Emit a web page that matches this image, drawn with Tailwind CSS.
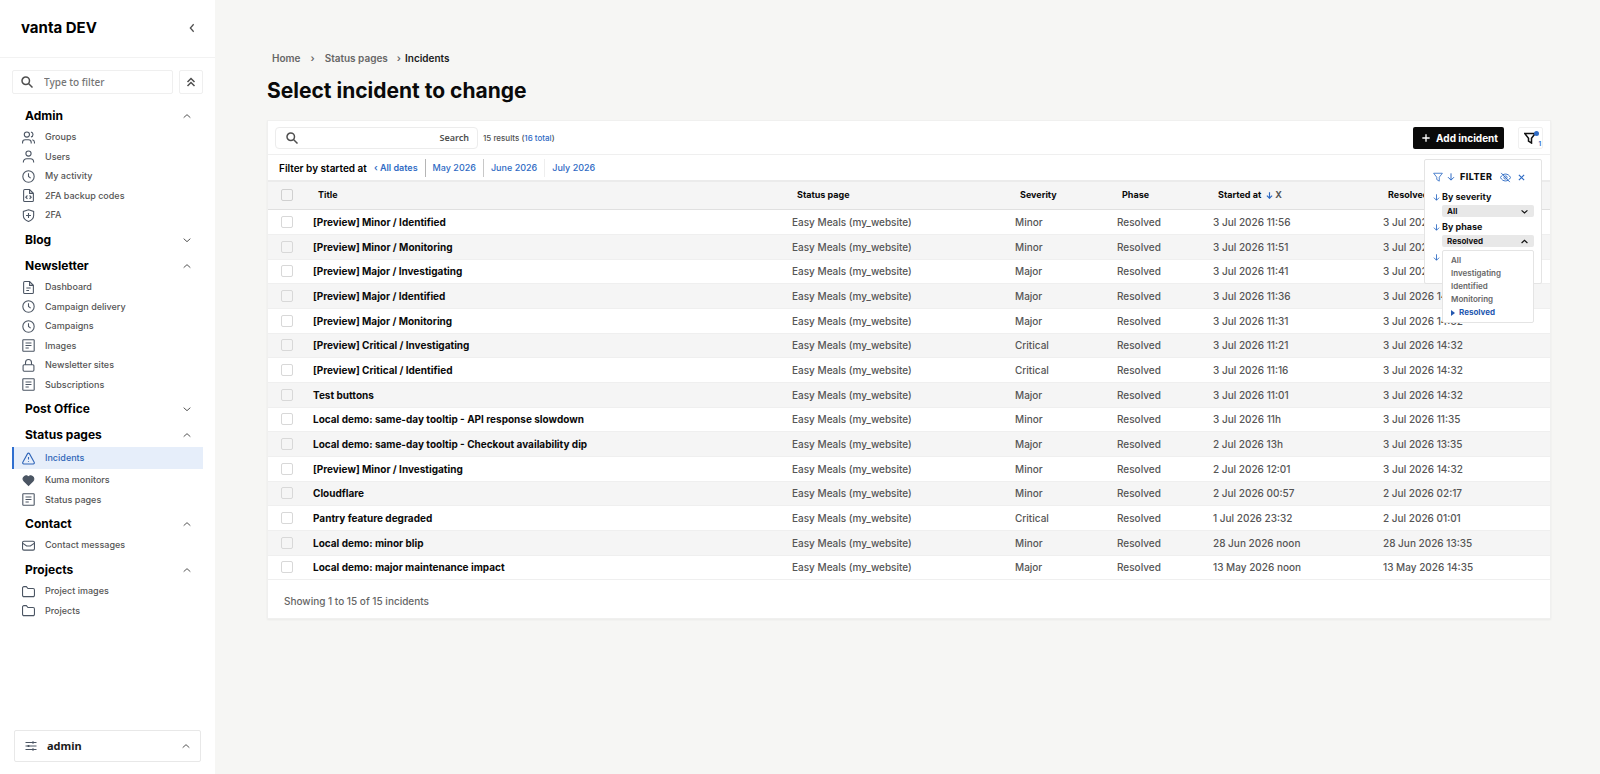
<!DOCTYPE html>
<html lang="en">

<head>
    <meta charset="UTF-8">
    <meta name="viewport" content="width=device-width, initial-scale=1.0">
    <title>Select incident to change | vanta DEV</title>
    <script src="https://cdn.jsdelivr.net/npm/@tailwindcss/browser@4"></script>
</head>

<body class="min-h-screen flex bg-[#f6f6f4] font-['Inter',sans-serif] text-[11px] leading-4 text-[#4f4f4f]">

    <!-- Icon sprite -->
    <svg class="hidden" xmlns="http://www.w3.org/2000/svg">
        <symbol id="i-search" viewBox="0 0 24 24"><circle cx="9.500" cy="9.500" r="7.500" /><path d="M15 15l8 8" /></symbol>
        <symbol id="i-up" viewBox="0 0 24 24"><path d="M2 17l10-9 10 9" /></symbol>
        <symbol id="i-down" viewBox="0 0 24 24"><path d="M2 8l10 9 10-9" /></symbol>
        <symbol id="i-left" viewBox="0 0 24 24"><path d="M16 3l-8 9 8 9" /></symbol>
        <symbol id="i-dblup" viewBox="0 0 24 24"><path d="M5 12l7-7 7 7M5 20l7-7 7 7" /></symbol>
        <symbol id="i-groups" viewBox="0 0 24 24"><circle cx="9" cy="6.500" r="4.800" /><path d="M1 23v-2a5 5 0 0 1 5-5h6a5 5 0 0 1 5 5v2M16.500 1.800a4.800 4.800 0 0 1 0 9.400M23 23v-2a5 5 0 0 0-4-4.900" /></symbol>
        <symbol id="i-user" viewBox="0 0 24 24"><circle cx="12" cy="6.500" r="4.800" /><path d="M2.500 23v-1a6 6 0 0 1 6-6h7a6 6 0 0 1 6 6v1" /></symbol>
        <symbol id="i-clock" viewBox="0 0 24 24"><circle cx="12" cy="12" r="10.500" /><path d="M12 6v6l4 3" /></symbol>
        <symbol id="i-code" viewBox="0 0 24 24"><path d="M14 1H5a2 2 0 0 0-2 2v18a2 2 0 0 0 2 2h14a2 2 0 0 0 2-2V8zM14 1v7h7M10 12l-3 3 3 3M14 12l3 3-3 3" /></symbol>
        <symbol id="i-shield" viewBox="0 0 24 24"><path d="M12 1.500l9.500 3V12c0 5.500-4 9-9.500 11-5.500-2-9.500-5.500-9.500-11V4.500zM12 7.500v9M7.500 12h9" /></symbol>
        <symbol id="i-file" viewBox="0 0 24 24"><path d="M14 1H5a2 2 0 0 0-2 2v18a2 2 0 0 0 2 2h14a2 2 0 0 0 2-2V8zM14 1v7h7M8 13h8M8 17.500h5" /></symbol>
        <symbol id="i-list" viewBox="0 0 24 24"><rect x="1.500" y="1.500" width="21" height="21" rx="1" /><path d="M6.500 7.500h11M6.500 12h11M6.500 16.500h6" /></symbol>
        <symbol id="i-lock" viewBox="0 0 24 24"><rect x="2" y="10.500" width="20" height="12" rx="2" /><path d="M6.500 10.500V6.500a5.500 5.500 0 0 1 11 0v4" /></symbol>
        <symbol id="i-alert" viewBox="0 0 24 24"><path d="M10.300 3L1.500 19a2 2 0 0 0 1.700 3h17.600a2 2 0 0 0 1.700-3L13.700 3a2 2 0 0 0-3.400 0zM12 9v5M12 17v1.500" /></symbol>
        <symbol id="i-heart" viewBox="0 0 24 24"><path d="M12 21L3.500 12.500a5.500 5.500 0 0 1 8.500-7 5.500 5.500 0 0 1 8.500 7z" fill="currentColor" /></symbol>
        <symbol id="i-mail" viewBox="0 0 24 24"><rect x="1" y="4" width="22" height="16.500" rx="2.500" /><path d="M1 7.500l7.500 5.500h7L23 7.500" /></symbol>
        <symbol id="i-folder" viewBox="0 0 24 24"><path d="M23 19a2.500 2.500 0 0 1-2.500 2.500h-17A2.500 2.500 0 0 1 1 19V5.500A2.500 2.500 0 0 1 3.500 3H8l3 3.500h9.500A2.500 2.500 0 0 1 23 9z" /></symbol>
        <symbol id="i-sliders" viewBox="0 0 24 24"><path d="M1 5h22M1 12h22M1 19h22" /><path d="M16 3v4M7 10v4M16 17v4" stroke-width="3.500" /></symbol>
        <symbol id="i-funnel" viewBox="0 0 24 24"><path d="M1.500 3h21L15 12.500V22l-6-4v-5.500z" /></symbol>
        <symbol id="i-arrow" viewBox="0 0 24 24"><path d="M12 1v20M3 12.500l9 9 9-9" /></symbol>
        <symbol id="i-x" viewBox="0 0 24 24"><path d="M3 3l18 18M21 3L3 21" /></symbol>
        <symbol id="i-plus" viewBox="0 0 24 24"><path d="M12 1v22M1 12h22" /></symbol>
        <symbol id="i-eyeoff" viewBox="0 0 24 24"><path d="M1 12c2.500-5 6.500-7.500 11-7.500S20.500 7 23 12c-2.500 5-6.500 7.500-11 7.500S3.500 17 1 12zM2.500 2l19 20" /><circle cx="12" cy="12" r="3.500" /></symbol>
    </svg>

    <!-- Sidebar -->
    <aside class="w-[215px] shrink-0 flex flex-col bg-white">
        <div class="h-[58px] pb-[2px] pl-[21px] pr-[14px] flex items-center justify-between border-b border-[#f2f2f2]">
            <a href="#" class="text-[15px] font-bold text-black">vanta DEV</a>
            <button type="button" aria-label="Collapse sidebar" class="p-1">
                <svg class="size-[10px] fill-none stroke-current stroke-3"><use href="#i-left" /></svg>
            </button>
        </div>

        <div class="flex gap-[6px] px-3 pt-3 pb-[9px]">
            <label class="flex-1 flex items-center h-6 pl-2 border border-[#efefef] rounded-xs">
                <svg class="size-3 shrink-0 fill-none stroke-current stroke-3"><use href="#i-search" /></svg>
                <input type="text" aria-label="Filter menu" placeholder="Type to filter" class="w-full ml-[11px] outline-none font-['Noto_Sans',sans-serif] text-[10px] font-medium placeholder:text-[#757575]">
            </label>
            <button type="button" aria-label="Collapse all" class="size-6 flex items-center justify-center border border-[#efefef] rounded-xs">
                <svg class="size-3 fill-none stroke-current stroke-3"><use href="#i-dblup" /></svg>
            </button>
        </div>

        <nav class="flex flex-col gap-[2px] px-3 text-[9px] font-medium text-[#555]">
            <section>
                <button type="button" class="w-full h-6 pt-[2px] pl-[13px] pr-3 flex items-center justify-between text-xs font-bold text-black">Admin
                    <svg class="size-2 fill-none stroke-[#555] stroke-3"><use href="#i-up" /></svg>
                </button>
                <ul class="fill-none stroke-[#4b5563] stroke-2">
                    <li class="h-5 even:h-[19px]"><a href="#" class="h-full pl-[10px] flex items-center gap-[10px]"><svg class="size-[13px]"><use href="#i-groups" /></svg>Groups</a></li>
                    <li class="h-5 even:h-[19px]"><a href="#" class="h-full pl-[10px] flex items-center gap-[10px]"><svg class="size-[13px]"><use href="#i-user" /></svg>Users</a></li>
                    <li class="h-5 even:h-[19px]"><a href="#" class="h-full pl-[10px] flex items-center gap-[10px]"><svg class="size-[13px]"><use href="#i-clock" /></svg>My activity</a></li>
                    <li class="h-5 even:h-[19px]"><a href="#" class="h-full pl-[10px] flex items-center gap-[10px]"><svg class="size-[13px]"><use href="#i-code" /></svg>2FA backup codes</a></li>
                    <li class="h-5 even:h-[19px]"><a href="#" class="h-full pl-[10px] flex items-center gap-[10px]"><svg class="size-[13px]"><use href="#i-shield" /></svg>2FA</a></li>
                </ul>
            </section>
            <section>
                <button type="button" class="w-full h-6 pt-[2px] pl-[13px] pr-3 flex items-center justify-between text-xs font-bold text-black">Blog
                    <svg class="size-2 fill-none stroke-[#555] stroke-3"><use href="#i-down" /></svg>
                </button>
            </section>
            <section>
                <button type="button" class="w-full h-6 pt-[2px] pl-[13px] pr-3 flex items-center justify-between text-xs font-bold text-black">Newsletter
                    <svg class="size-2 fill-none stroke-[#555] stroke-3"><use href="#i-up" /></svg>
                </button>
                <ul class="fill-none stroke-[#4b5563] stroke-2">
                    <li class="h-5 even:h-[19px]"><a href="#" class="h-full pl-[10px] flex items-center gap-[10px]"><svg class="size-[13px]"><use href="#i-file" /></svg>Dashboard</a></li>
                    <li class="h-5 even:h-[19px]"><a href="#" class="h-full pl-[10px] flex items-center gap-[10px]"><svg class="size-[13px]"><use href="#i-clock" /></svg>Campaign delivery</a></li>
                    <li class="h-5 even:h-[19px]"><a href="#" class="h-full pl-[10px] flex items-center gap-[10px]"><svg class="size-[13px]"><use href="#i-clock" /></svg>Campaigns</a></li>
                    <li class="h-5 even:h-[19px]"><a href="#" class="h-full pl-[10px] flex items-center gap-[10px]"><svg class="size-[13px]"><use href="#i-list" /></svg>Images</a></li>
                    <li class="h-5 even:h-[19px]"><a href="#" class="h-full pl-[10px] flex items-center gap-[10px]"><svg class="size-[13px]"><use href="#i-lock" /></svg>Newsletter sites</a></li>
                    <li class="h-5 even:h-[19px]"><a href="#" class="h-full pl-[10px] flex items-center gap-[10px]"><svg class="size-[13px]"><use href="#i-list" /></svg>Subscriptions</a></li>
                </ul>
            </section>
            <section>
                <button type="button" class="w-full h-6 pt-[2px] pl-[13px] pr-3 flex items-center justify-between text-xs font-bold text-black">Post Office
                    <svg class="size-2 fill-none stroke-[#555] stroke-3"><use href="#i-down" /></svg>
                </button>
            </section>
            <section>
                <button type="button" class="w-full h-6 pt-[2px] pl-[13px] pr-3 flex items-center justify-between text-xs font-bold text-black">Status pages
                    <svg class="size-2 fill-none stroke-[#555] stroke-3"><use href="#i-up" /></svg>
                </button>
                <ul class="fill-none stroke-[#4b5563] stroke-2">
                    <li class="h-[22px] my-px bg-[#e6eefa] border-l-2 border-[#2f6fd0] text-[#2f65b8] stroke-[#2f65b8]"><a href="#" aria-current="page" class="h-full pl-2 flex items-center gap-[10px]"><svg class="size-[13px]"><use href="#i-alert" /></svg>Incidents</a></li>
                    <li class="h-5"><a href="#" class="h-full pl-[10px] flex items-center gap-[10px]"><svg class="size-[13px] text-[#4b5563]"><use href="#i-heart" /></svg>Kuma monitors</a></li>
                    <li class="h-[19px]"><a href="#" class="h-full pl-[10px] flex items-center gap-[10px]"><svg class="size-[13px]"><use href="#i-list" /></svg>Status pages</a></li>
                </ul>
            </section>
            <section>
                <button type="button" class="w-full h-6 pt-[2px] pl-[13px] pr-3 flex items-center justify-between text-xs font-bold text-black">Contact
                    <svg class="size-2 fill-none stroke-[#555] stroke-3"><use href="#i-up" /></svg>
                </button>
                <ul class="fill-none stroke-[#4b5563] stroke-2">
                    <li class="h-5 even:h-[19px]"><a href="#" class="h-full pl-[10px] flex items-center gap-[10px]"><svg class="size-[13px]"><use href="#i-mail" /></svg>Contact messages</a></li>
                </ul>
            </section>
            <section>
                <button type="button" class="w-full h-6 pt-[2px] pl-[13px] pr-3 flex items-center justify-between text-xs font-bold text-black">Projects
                    <svg class="size-2 fill-none stroke-[#555] stroke-3"><use href="#i-up" /></svg>
                </button>
                <ul class="fill-none stroke-[#4b5563] stroke-2">
                    <li class="h-5 even:h-[19px]"><a href="#" class="h-full pl-[10px] flex items-center gap-[10px]"><svg class="size-[13px]"><use href="#i-folder" /></svg>Project images</a></li>
                    <li class="h-5 even:h-[19px]"><a href="#" class="h-full pl-[10px] flex items-center gap-[10px]"><svg class="size-[13px]"><use href="#i-folder" /></svg>Projects</a></li>
                </ul>
            </section>
        </nav>

        <button type="button" class="mt-auto mx-[14px] mb-3 h-8 px-[10px] flex items-center border border-[#e8e8e8] rounded-xs font-['Noto_Sans',sans-serif] text-[11px] font-bold text-[#1a1a1a]">
            <svg class="size-3 mr-[10px] fill-none stroke-[#4b5563] stroke-2"><use href="#i-sliders" /></svg>
            admin
            <svg class="size-2 ml-auto fill-none stroke-[#555] stroke-3"><use href="#i-up" /></svg>
        </button>
    </aside>

    <!-- Content -->
    <main class="flex-1 min-w-0 pt-[50px] pl-[52px] pr-[49px]">
        <nav aria-label="Breadcrumb" class="pl-[5px] flex text-[10px] font-semibold text-[#666]">
            <a href="#">Home</a>
            <span class="mx-[10px]">›</span>
            <a href="#">Status pages</a>
            <span class="ml-[9px] mr-1">›</span>
            <span class="text-[#1a1a1a]">Incidents</span>
        </nav>
        <h1 class="mt-[9px] text-[21px] leading-8 font-bold text-[#0a0a0a]">Select incident to change</h1>

        <div class="relative mt-[13px] bg-white border border-[#f0f0ef] shadow-xs">
            <div class="h-[33px] px-[7px] flex items-center">
                <form class="w-[203px] h-[22px] flex items-center pl-[10px] pr-2 border border-[#ececec] rounded-sm">
                    <svg class="size-3 shrink-0 fill-none stroke-current stroke-3"><use href="#i-search" /></svg>
                    <input type="text" aria-label="Search incidents" class="flex-1 min-w-0 px-2 outline-none">
                    <button type="submit" class="font-['Noto_Sans',sans-serif] text-[9px] font-semibold">Search</button>
                </form>
                <span class="ml-[5px] text-[8px] font-medium">15 results (<a href="#" class="text-[#2f6bc4]">16 total</a>)</span>
                <a href="#" class="ml-auto h-[22px] pl-[9px] pr-[6px] flex items-center gap-[6px] bg-[#0a0a0a] rounded-xs text-[10px] font-bold text-white">
                    <svg class="size-2 fill-none stroke-current stroke-4"><use href="#i-plus" /></svg>
                    Add incident
                </a>
                <button type="button" aria-label="Filters" class="relative ml-[14px] w-[25px] h-[22px] pl-[5px] flex items-center border border-[#f0f0f0] rounded-xs">
                    <svg class="size-3 fill-none stroke-[#111] stroke-3"><use href="#i-funnel" /></svg>
                    <span class="absolute top-[3px] right-[3px] size-[5px] rounded-full bg-[#2f6bc4]"></span>
                    <span class="absolute bottom-0 right-px text-[6px] leading-[8px] font-bold text-[#2f6bc4]">1</span>
                </button>
            </div>

            <div class="h-[26px] pl-[11px] flex items-center border-t border-[#efefef] text-[9px] font-medium text-[#2f6bc4]">
                <span class="text-[10px] font-semibold text-black">Filter by started at</span>
                <a href="#" class="pl-[7px] pr-[7px] font-semibold">‹ All dates</a>
                <a href="#" class="px-[7px] border-l border-[#b5b5b5] leading-[18px]">May 2026</a>
                <a href="#" class="px-[7px] border-l border-[#c8c8c8] leading-[18px]">June 2026</a>
                <a href="#" class="px-[7px] border-l border-[#eee] leading-[18px]">July 2026</a>
            </div>

            <table class="w-full table-fixed text-left border-collapse">
                <colgroup>
                    <col class="w-[37px]">
                    <col>
                    <col class="w-[223px]">
                    <col class="w-[102px]">
                    <col class="w-[96px]">
                    <col class="w-[170px]">
                    <col class="w-[175px]">
                </colgroup>
                <thead class="bg-[#f5f5f5] text-[9px] text-[#0a0a0a] border-t-2 border-b border-t-[#ebebeb] border-b-[#e0e0e0]">
                    <tr class="h-7">
                        <th class="pl-[13px]"><input type="checkbox" aria-label="Select all" class="block appearance-none size-3 border border-[#d0d0d0] rounded-xs"></th>
                        <th class="px-[13px]">Title</th>
                        <th class="px-[13px]">Status page</th>
                        <th class="px-[13px]">Severity</th>
                        <th class="px-[13px]">Phase</th>
                        <th class="px-[13px]">
                            <span class="flex items-center">Started at
                                <svg class="size-[7px] ml-[5px] mr-[2px] fill-none stroke-[#2f6bc4] stroke-4"><use href="#i-arrow" /></svg>
                                <a href="#" class="text-[#555]">X</a>
                            </span>
                        </th>
                        <th class="px-[13px]">Resolved at</th>
                    </tr>
                </thead>
                <tbody id="incident-rows"></tbody>
            </table>

            <p class="h-[38px] pt-1 pl-4 flex items-center text-[10px] font-medium text-[#666]">Showing 1 to 15 of 15 incidents</p>

            <!-- Filter panel -->
            <div class="absolute top-[38px] right-2 w-[118px] h-[125px] px-2 pt-2 bg-white border border-[#e4e4e4] rounded-xs text-[9px] font-bold text-[#111]">
                <div class="h-[18px] flex items-center fill-none stroke-[#2f6bc4]">
                    <svg class="size-[10px] stroke-2"><use href="#i-funnel" /></svg>
                    <svg class="size-2 ml-1 stroke-3"><use href="#i-arrow" /></svg>
                    <h2 class="ml-[5px] mr-2 text-[9px] font-extrabold tracking-wider">FILTER</h2>
                    <button type="button" aria-label="Hide counts"><svg class="size-[11px] stroke-2"><use href="#i-eyeoff" /></svg></button>
                    <button type="button" aria-label="Close filters" class="ml-[7px]"><svg class="size-[7px] stroke-4"><use href="#i-x" /></svg></button>
                </div>
                <div class="mt-[3px]">
                    <label for="by-severity" class="flex items-center gap-[2px] leading-[16px]"><svg class="size-[7px] fill-none stroke-[#2f6bc4] stroke-3"><use href="#i-arrow" /></svg>By severity</label>
                    <span class="relative block ml-[9px]">
                        <select id="by-severity" class="block w-[92px] h-3 pl-[5px] appearance-none bg-[#e8e8e8] rounded-xs text-[8px] leading-3">
                            <option>All</option>
                        </select>
                        <svg class="absolute right-[5px] top-[3px] size-[7px] fill-none stroke-current stroke-4"><use href="#i-down" /></svg>
                    </span>
                </div>
                <div class="mt-[2px] relative">
                    <label for="by-phase" class="flex items-center gap-[2px] leading-[16px]"><svg class="size-[7px] fill-none stroke-[#2f6bc4] stroke-3"><use href="#i-arrow" /></svg>By phase</label>
                    <span class="relative block ml-[9px]">
                        <select id="by-phase" class="block w-[92px] h-3 pl-[5px] appearance-none bg-[#e8e8e8] rounded-xs text-[8px] leading-3">
                            <option>Resolved</option>
                        </select>
                        <svg class="absolute right-[5px] top-[3px] size-[7px] fill-none stroke-current stroke-4"><use href="#i-up" /></svg>
                    </span>
                    <div class="absolute top-[31px] left-[9px] w-[92px] h-[73px] pl-2 pt-[3px] flex flex-col items-start bg-white border border-[#e4e4e4] rounded-xs text-[8px] leading-[13px] font-semibold text-[#666]">
                        <button type="button">All</button>
                        <button type="button">Investigating</button>
                        <button type="button">Identified</button>
                        <button type="button">Monitoring</button>
                        <button type="button" class="flex items-center gap-1 font-bold text-[#2458b0]"><span class="border-y-3 border-l-4 border-y-transparent border-l-current"></span>Resolved</button>
                    </div>
                </div>
                <button type="button" aria-label="More filters" class="mt-[7px] block"><svg class="size-[7px] fill-none stroke-[#2f6bc4] stroke-3"><use href="#i-arrow" /></svg></button>
            </div>
        </div>
    </main>

    <script>
        const incidents = [
            ['[Preview] Minor / Identified', 'Minor', '3 Jul 2026 11:56', '3 Jul 2026 14:32'],
            ['[Preview] Minor / Monitoring', 'Minor', '3 Jul 2026 11:51', '3 Jul 2026 14:32'],
            ['[Preview] Major / Investigating', 'Major', '3 Jul 2026 11:41', '3 Jul 2026 14:32'],
            ['[Preview] Major / Identified', 'Major', '3 Jul 2026 11:36', '3 Jul 2026 14:32'],
            ['[Preview] Major / Monitoring', 'Major', '3 Jul 2026 11:31', '3 Jul 2026 14:32'],
            ['[Preview] Critical / Investigating', 'Critical', '3 Jul 2026 11:21', '3 Jul 2026 14:32'],
            ['[Preview] Critical / Identified', 'Critical', '3 Jul 2026 11:16', '3 Jul 2026 14:32'],
            ['Test buttons', 'Major', '3 Jul 2026 11:01', '3 Jul 2026 14:32'],
            ['Local demo: same-day tooltip - API response slowdown', 'Minor', '3 Jul 2026 11h', '3 Jul 2026 11:35'],
            ['Local demo: same-day tooltip - Checkout availability dip', 'Major', '2 Jul 2026 13h', '3 Jul 2026 13:35'],
            ['[Preview] Minor / Investigating', 'Minor', '2 Jul 2026 12:01', '3 Jul 2026 14:32'],
            ['Cloudflare', 'Minor', '2 Jul 2026 00:57', '2 Jul 2026 02:17'],
            ['Pantry feature degraded', 'Critical', '1 Jul 2026 23:32', '2 Jul 2026 01:01'],
            ['Local demo: minor blip', 'Minor', '28 Jun 2026 noon', '28 Jun 2026 13:35'],
            ['Local demo: major maintenance impact', 'Major', '13 May 2026 noon', '13 May 2026 14:35']
        ];

        document.getElementById('incident-rows').innerHTML = incidents.map(([title, severity, started, resolved]) => `
            <tr class="h-[25px] nth-[3n]:h-6 even:bg-[#f5f5f5] border-b border-[#efefef] text-[10px] font-medium text-[#555]">
                <td class="pl-[13px]"><input type="checkbox" aria-label="Select ${title}" class="block appearance-none size-3 border border-[#d8d8d8] rounded-xs"></td>
                <td class="px-2"><a href="#" class="font-bold text-[#0a0a0a]">${title}</a></td>
                <td class="px-2">Easy Meals (my_website)</td>
                <td class="px-2">${severity}</td>
                <td class="px-2">Resolved</td>
                <td class="px-2">${started}</td>
                <td class="px-2">${resolved}</td>
            </tr>`).join('');
    </script>

</body>
</html>
